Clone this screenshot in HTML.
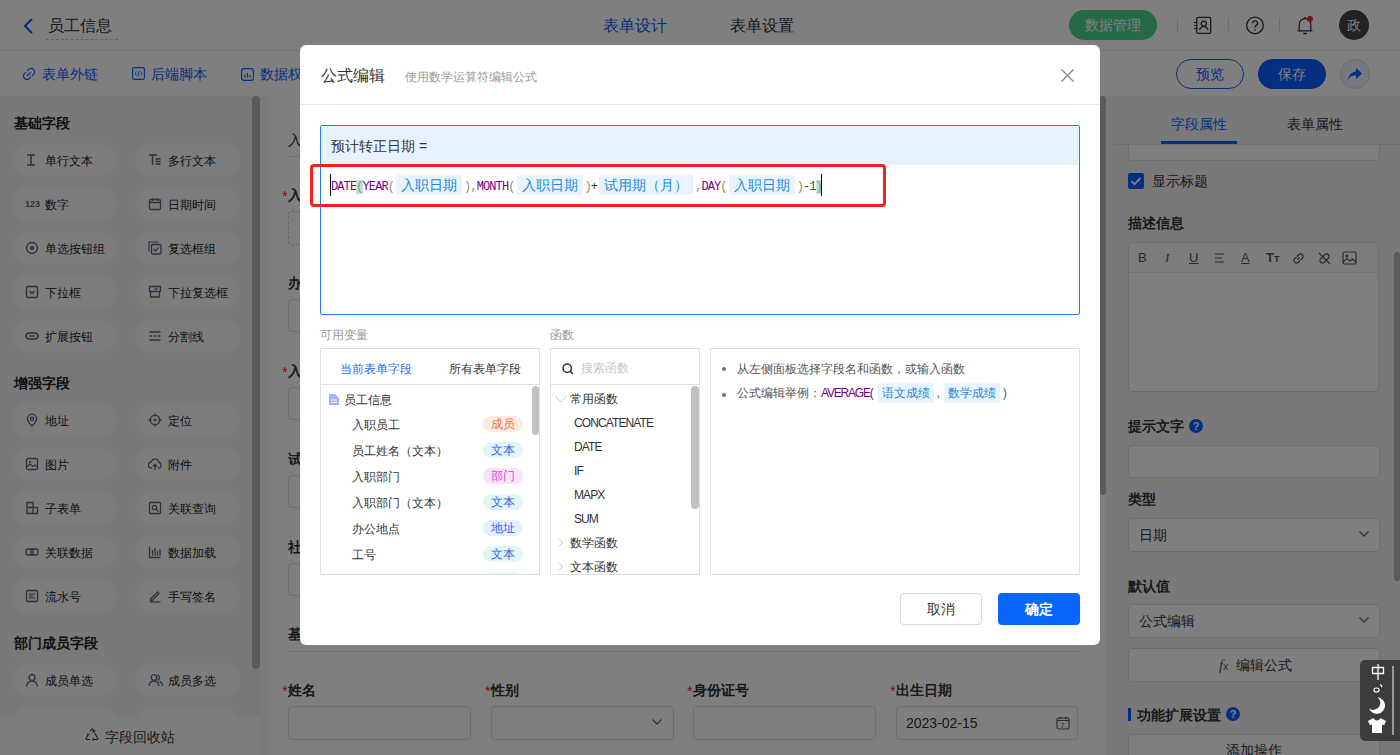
<!DOCTYPE html>
<html><head><meta charset="utf-8">
<style>
*{box-sizing:border-box;margin:0;padding:0}
html,body{width:1400px;height:755px;overflow:hidden;background:#fff}
body{position:relative;font-family:"Liberation Sans",sans-serif;color:#333;font-size:14px}
.a{position:absolute;white-space:nowrap}
.t{line-height:1;}
svg{display:block}
/* header */
#hdr{left:0;top:0;width:1400px;height:51px;background:#fff;border-bottom:1px solid #e8e8e8}
#tb{left:0;top:51px;width:1400px;height:45px;background:#fff}
#side{left:0;top:96px;width:268px;height:659px;background:#f2f3f5}
#form{left:268px;top:96px;width:838px;height:659px;background:#fff}
#rp{left:1106px;top:96px;width:294px;height:659px;background:#f2f3f5}
.pill{position:absolute;width:105px;height:34px;border-radius:17px;background:#fafbfc}
.pill span{position:absolute;left:33px;top:12px;font-size:12px;line-height:12px;color:#222}
.pill svg{position:absolute;left:13px;top:10px}
.sect{position:absolute;left:14px;font-size:14px;font-weight:bold;line-height:14px;color:#222}
.lbl{position:absolute;font-size:14px;font-weight:bold;line-height:14px;color:#333}
.req{position:absolute;color:#e02020;font-size:14px;line-height:14px}
.inp{position:absolute;border:1px solid #ddd;border-radius:4px;background:#fff}
#mask{left:0;top:0;width:1400px;height:755px;background:rgba(0,0,0,.5)}
#modal{left:300px;top:45px;width:800px;height:600px;background:#fff;border-radius:6px}
.chip{display:inline-block;background:#e8f3fd;color:#1a8ad8;font-size:14px;line-height:20px;height:20px;padding:0 5px;margin:0 2px;border-radius:2px;vertical-align:top;font-family:"Liberation Sans",sans-serif}
.code{font-family:"Liberation Mono",monospace;font-size:12px;letter-spacing:-0.9px}
.kw{color:#770088}
.br{color:#a0875a}
.op{color:#333}
.num{color:#116644}
.badge{position:absolute;left:162px;width:40px;height:16px;border-radius:8px;font-size:12px;line-height:16px;text-align:center}
.vrow{position:absolute;left:31px;font-size:12px;line-height:12px;color:#333}
.fn{letter-spacing:-0.9px}
.frow{position:absolute;font-size:12px;line-height:12px;color:#333}
</style></head><body>

<!-- ============ HEADER ============ -->
<div id="hdr" class="a"></div>
<svg class="a" style="left:22px;top:17px" width="14" height="18" viewBox="0 0 14 18"><polyline points="10,2 3,9 10,16" fill="none" stroke="#0b5cff" stroke-width="2.2"/></svg>
<div class="a t" style="left:48px;top:18px;font-size:16px;color:#333">员工信息</div>
<div class="a" style="left:46px;top:39px;width:72px;border-top:1px dashed #c8c8c8"></div>
<div class="a t" style="left:603px;top:18px;font-size:16px;color:#0b5cff">表单设计</div>
<div class="a t" style="left:730px;top:18px;font-size:16px;color:#333">表单设置</div>
<div class="a" style="left:1069px;top:10px;width:88px;height:30px;border-radius:15px;background:#4bd38f"></div>
<div class="a t" style="left:1085px;top:18px;font-size:14px;color:#fff">数据管理</div>
<div class="a" style="left:1177px;top:18px;width:1px;height:14px;background:#ddd"></div>
<div class="a" style="left:1228px;top:18px;width:1px;height:14px;background:#ddd"></div>
<div class="a" style="left:1279px;top:18px;width:1px;height:14px;background:#ddd"></div>
<svg class="a" style="left:1193px;top:16px" width="20" height="20" viewBox="0 0 20 20"><rect x="3.7" y="1.4" width="14" height="16" rx="1.5" fill="none" stroke="#333" stroke-width="1.3"/><circle cx="10.8" cy="7.6" r="2.5" fill="none" stroke="#333" stroke-width="1.3"/><path d="M6.6 14.2c.6-2.4 2.2-3.6 4.2-3.6s3.6 1.2 4.2 3.6" fill="none" stroke="#333" stroke-width="1.3"/><path d="M1 6.5h3.5M1 9.5h3.5M1 12.5h3.5" stroke="#333" stroke-width="1.1"/></svg>
<svg class="a" style="left:1245px;top:16px" width="20" height="20" viewBox="0 0 20 20"><circle cx="10" cy="9.4" r="8.3" fill="none" stroke="#333" stroke-width="1.3"/><path d="M7.5 7.3a2.5 2.5 0 1 1 3.5 2.3c-.7.3-1 .8-1 1.5v.7" fill="none" stroke="#333" stroke-width="1.3"/><circle cx="10" cy="13.8" r=".85" fill="#333"/></svg>
<svg class="a" style="left:1295px;top:15px" width="20" height="21" viewBox="0 0 20 21"><path d="M4.2 15.8V9.5a5.8 5.8 0 0 1 11.6 0v6.3M2.6 15.8h14.8M8.3 18.5h3.4M10 2v1.5" fill="none" stroke="#333" stroke-width="1.3" stroke-linejoin="round"/><circle cx="15" cy="4" r="2.9" fill="#e03030"/></svg>
<div class="a" style="left:1339px;top:10px;width:30px;height:30px;border-radius:15px;background:#444"></div>
<div class="a t" style="left:1347px;top:18px;font-size:14px;color:#fff">政</div>

<!-- ============ TOOLBAR ============ -->
<div id="tb" class="a"></div>
<svg class="a" style="left:22px;top:67px" width="14" height="14" viewBox="0 0 14 14"><path d="M5.5 3.8A3.6 3.6 0 1 1 10.1 8.4M8.5 10.1A3.6 3.6 0 1 1 3.9 5.5M5.4 8.6l3.2-3.2" fill="none" stroke="#0b5cff" stroke-width="1.1" stroke-linecap="round"/></svg>
<div class="a t" style="left:42px;top:67px;font-size:14px;color:#0b5cff">表单外链</div>
<svg class="a" style="left:132px;top:67px" width="13" height="13" viewBox="0 0 13 13"><rect x=".6" y=".6" width="11.8" height="11.8" rx="1.5" fill="none" stroke="#0b5cff" stroke-width="1.1"/><path d="M4.5 4.5L2.8 6.5l1.7 2M8.5 4.5l1.7 2-1.7 2M7.2 4L5.8 9" fill="none" stroke="#0b5cff" stroke-width=".9"/></svg>
<div class="a t" style="left:151px;top:67px;font-size:14px;color:#0b5cff">后端脚本</div>
<svg class="a" style="left:241px;top:68px" width="13" height="13" viewBox="0 0 13 13"><rect x=".6" y=".6" width="11.8" height="11.8" rx="2.5" fill="none" stroke="#0b5cff" stroke-width="1.1"/><path d="M4 6.5v3M6.5 5v4.5M9 7v2.5" stroke="#0b5cff" stroke-width="1.1"/></svg>
<div class="a t" style="left:260px;top:67px;font-size:14px;color:#0b5cff">数据权限</div>
<div class="a" style="left:1176px;top:59px;width:68px;height:30px;border-radius:15px;border:1px solid #0b5cff;background:#fff"></div>
<div class="a t" style="left:1196px;top:67px;font-size:14px;color:#0b5cff">预览</div>
<div class="a" style="left:1258px;top:59px;width:68px;height:30px;border-radius:15px;background:#0b5cff"></div>
<div class="a t" style="left:1278px;top:67px;font-size:14px;color:#fff">保存</div>
<div class="a" style="left:1340px;top:59px;width:30px;height:30px;border-radius:15px;border:1px solid #c9d6f5;background:#eef3ff"></div>
<svg class="a" style="left:1346px;top:66px" width="18" height="16" viewBox="0 0 18 16"><path d="M10 2l6 5.5-6 5.5V9.6C6 9.4 3.5 10.8 2 14c.5-5 3.4-8 8-8.6z" fill="#0b5cff"/></svg>

<!-- ============ LEFT SIDEBAR ============ -->
<div id="side" class="a"></div>
<div class="a" style="left:252px;top:96px;width:8px;height:573px;border-radius:4px;background:#b4b4b4"></div>
<div class="a" style="left:260px;top:96px;width:8px;height:659px;background:#f6f6f6"></div>

<div class="sect" style="top:116px">基础字段</div>
<div class="pill" style="left:12px;top:143px"><svg width="12" height="14" viewBox="0 0 12 14"><path d="M2 2h8M2 12h8M6 2v10" stroke="#56647d" stroke-width="1.6"/></svg><span>单行文本</span></div>
<div class="pill" style="left:135px;top:143px"><svg width="14" height="14" viewBox="0 0 14 14"><path d="M1 2h8M4.5 2v10M7.5 6h5M7.5 8.5h5M7.5 11h5" stroke="#56647d" stroke-width="1.4"/></svg><span>多行文本</span></div>
<div class="pill" style="left:12px;top:187px"><svg width="16" height="14" viewBox="0 0 16 14"><text x="0" y="10" font-size="9" font-weight="bold" fill="#56647d" font-family="Liberation Sans">123</text></svg><span>数字</span></div>
<div class="pill" style="left:135px;top:187px"><svg width="14" height="14" viewBox="0 0 14 14"><rect x="1.5" y="2.5" width="11" height="10" rx="1.5" fill="none" stroke="#56647d" stroke-width="1.3"/><path d="M1.5 5.5h11M4.5 1v3M9.5 1v3" stroke="#56647d" stroke-width="1.3"/></svg><span>日期时间</span></div>
<div class="pill" style="left:12px;top:231px"><svg width="14" height="14" viewBox="0 0 14 14"><circle cx="7" cy="7" r="5.5" fill="none" stroke="#56647d" stroke-width="1.3"/><circle cx="7" cy="7" r="2" fill="#56647d"/></svg><span>单选按钮组</span></div>
<div class="pill" style="left:135px;top:231px"><svg width="14" height="14" viewBox="0 0 14 14"><path d="M1 10.5V1h9.5" fill="none" stroke="#56647d" stroke-width="1.2"/><rect x="3.5" y="3.5" width="9.5" height="9.5" rx="1" fill="none" stroke="#56647d" stroke-width="1.3"/><path d="M5.6 8l1.8 1.8 3.2-3.4" fill="none" stroke="#56647d" stroke-width="1.2"/></svg><span>复选框组</span></div>
<div class="pill" style="left:12px;top:275px"><svg width="14" height="14" viewBox="0 0 14 14"><rect x="1.5" y="1.5" width="11" height="11" rx="1.5" fill="none" stroke="#56647d" stroke-width="1.3"/><path d="M4.5 6l2.5 2.5L9.5 6" fill="none" stroke="#56647d" stroke-width="1.3"/></svg><span>下拉框</span></div>
<div class="pill" style="left:135px;top:275px"><svg width="14" height="14" viewBox="0 0 14 14"><path d="M1.5 1.5h11v5h-11zM2.5 6.5v5.5h9V6.5" fill="none" stroke="#56647d" stroke-width="1.3" stroke-linejoin="round"/><path d="M6.5 3.5l1.2 1.2 1.6-1.8" fill="none" stroke="#56647d" stroke-width="1.1"/></svg><span>下拉复选框</span></div>
<div class="pill" style="left:12px;top:319px"><svg width="14" height="14" viewBox="0 0 14 14"><rect x="1" y="4" width="12" height="6" rx="3" fill="none" stroke="#56647d" stroke-width="1.4"/><path d="M4 7h6" stroke="#56647d" stroke-width="1.2"/></svg><span>扩展按钮</span></div>
<div class="pill" style="left:135px;top:319px"><svg width="14" height="14" viewBox="0 0 14 14"><path d="M1.5 3h11M1.5 11h11M1.5 7h3M6 7h2M9.5 7h3" stroke="#56647d" stroke-width="1.3"/></svg><span>分割线</span></div>

<div class="sect" style="top:376px">增强字段</div>
<div class="pill" style="left:12px;top:403px"><svg width="14" height="14" viewBox="0 0 14 14"><path d="M7 13s-4.5-4.2-4.5-7.3a4.5 4.5 0 0 1 9 0C11.5 8.8 7 13 7 13z" fill="none" stroke="#56647d" stroke-width="1.3"/><circle cx="7" cy="5.8" r="1.6" fill="none" stroke="#56647d" stroke-width="1.2"/></svg><span>地址</span></div>
<div class="pill" style="left:135px;top:403px"><svg width="14" height="14" viewBox="0 0 14 14"><circle cx="7" cy="7" r="4.8" fill="none" stroke="#56647d" stroke-width="1.3"/><circle cx="7" cy="7" r="1.3" fill="#56647d"/><path d="M7 .5v3M7 10.5v3M.5 7h3M10.5 7h3" stroke="#56647d" stroke-width="1.3"/></svg><span>定位</span></div>
<div class="pill" style="left:12px;top:447px"><svg width="14" height="14" viewBox="0 0 14 14"><rect x="1.5" y="1.5" width="11" height="11" rx="1.5" fill="none" stroke="#56647d" stroke-width="1.3"/><path d="M1.5 10l3.5-3 3 2.5 2-1.5 2.5 2" fill="none" stroke="#56647d" stroke-width="1.2"/><circle cx="5" cy="5" r="1.1" fill="#56647d"/></svg><span>图片</span></div>
<div class="pill" style="left:135px;top:447px"><svg width="14" height="14" viewBox="0 0 14 14"><path d="M4 11H3.5a3 3 0 0 1-.3-6A4 4 0 0 1 11 5.5a2.8 2.8 0 0 1-.5 5.5H10" fill="none" stroke="#56647d" stroke-width="1.3"/><path d="M7 13V7.5M5 9.5l2-2 2 2" fill="none" stroke="#56647d" stroke-width="1.3"/></svg><span>附件</span></div>
<div class="pill" style="left:12px;top:491px"><svg width="14" height="14" viewBox="0 0 14 14"><path d="M2 1.5h6v11H2zM8 6.5h4.5v6H8M2 6.5h6" fill="none" stroke="#56647d" stroke-width="1.3"/></svg><span>子表单</span></div>
<div class="pill" style="left:135px;top:491px"><svg width="14" height="14" viewBox="0 0 14 14"><rect x="1.5" y="1.5" width="11" height="11" rx="1" fill="none" stroke="#56647d" stroke-width="1.3"/><circle cx="6.5" cy="6.5" r="2.2" fill="none" stroke="#56647d" stroke-width="1.2"/><path d="M8.2 8.2l2.5 2.5M4 4h0" stroke="#56647d" stroke-width="1.3"/></svg><span>关联查询</span></div>
<div class="pill" style="left:12px;top:535px"><svg width="14" height="14" viewBox="0 0 14 14"><rect x="1" y="4" width="7" height="6" rx="1.5" fill="none" stroke="#56647d" stroke-width="1.3"/><rect x="6" y="4" width="7" height="6" rx="1.5" fill="none" stroke="#56647d" stroke-width="1.3"/></svg><span>关联数据</span></div>
<div class="pill" style="left:135px;top:535px"><svg width="14" height="14" viewBox="0 0 14 14"><path d="M1.5 1.5v11h11M4.5 5v5.5M7 3v7.5M9.5 6v4.5M12 4v6.5" fill="none" stroke="#56647d" stroke-width="1.3"/></svg><span>数据加载</span></div>
<div class="pill" style="left:12px;top:579px"><svg width="14" height="14" viewBox="0 0 14 14"><rect x="1.5" y="1.5" width="11" height="11" rx="1" fill="none" stroke="#56647d" stroke-width="1.3"/><path d="M4 5h6M4 7h4M4 9h6" stroke="#56647d" stroke-width="1.2"/></svg><span>流水号</span></div>
<div class="pill" style="left:135px;top:579px"><svg width="14" height="14" viewBox="0 0 14 14"><path d="M2.5 10L9.5 3l1.5 1.5-7 7H2.5z" fill="none" stroke="#56647d" stroke-width="1.3"/><path d="M1.5 13h11" stroke="#56647d" stroke-width="1.2"/></svg><span>手写签名</span></div>

<div class="sect" style="top:636px">部门成员字段</div>
<div class="pill" style="left:12px;top:663px"><svg width="14" height="14" viewBox="0 0 14 14"><circle cx="7" cy="4.5" r="3" fill="none" stroke="#56647d" stroke-width="1.3"/><path d="M1.5 13.5c.5-3.5 2.7-5.3 5.5-5.3s5 1.8 5.5 5.3" fill="none" stroke="#56647d" stroke-width="1.3"/></svg><span>成员单选</span></div>
<div class="pill" style="left:135px;top:663px"><svg width="16" height="14" viewBox="0 0 16 14"><circle cx="6" cy="4.5" r="2.8" fill="none" stroke="#56647d" stroke-width="1.3"/><path d="M1 13c.5-3.3 2.3-5 5-5s4.5 1.7 5 5M9.5 1.8a2.8 2.8 0 0 1 0 5.4M11.5 8.3c1.8.6 2.8 2.2 3.2 4.7" fill="none" stroke="#56647d" stroke-width="1.3"/></svg><span>成员多选</span></div>
<div class="pill" style="left:12px;top:707px"></div>
<div class="pill" style="left:135px;top:707px"></div>
<div class="a" style="left:0;top:717px;width:260px;height:38px;background:#fbfbfb"></div>
<svg class="a" style="left:84px;top:728px" width="16" height="14" viewBox="0 0 16 14"><path d="M6.2 3.2L7.6 1a.6.6 0 0 1 1 0l1.6 2.6M10.8 5.3l2.9 4.9c.3.5 0 1.2-.6 1.2H9.5M6.2 11.4H2.8c-.6 0-.9-.7-.6-1.2l1.9-3.2" fill="none" stroke="#333" stroke-width="1.05"/><path d="M10.8 2.2l-.4 1.9-1.9-.3M9.9 10.2l-1.6 1.2 1.6 1.3M2.9 5.9l1.4 1.2 1.1-1.6" fill="none" stroke="#333" stroke-width="1"/></svg>
<div class="a t" style="left:105px;top:730px;font-size:14px;color:#333">字段回收站</div>

<!-- ============ CENTER FORM ============ -->
<div id="form" class="a"></div>
<div class="a" style="left:1100px;top:96px;width:6px;height:399px;border-radius:3px;background:#b4b4b4"></div>
<div class="lbl" style="left:288px;top:133px;font-weight:normal;color:#222">入职信息</div>
<div class="a" style="left:288px;top:156px;width:790px;height:1px;background:#e0e0e0"></div>
<div class="req" style="left:282px;top:189px">*</div><div class="lbl" style="left:288px;top:188px">入职员工</div>
<div class="inp" style="left:288px;top:211px;width:790px;height:34px;border:1px dashed #ccc"></div>
<div class="lbl" style="left:288px;top:276px">办公地点</div>
<div class="inp" style="left:288px;top:299px;width:790px;height:33px"></div>
<div class="req" style="left:282px;top:365px">*</div><div class="lbl" style="left:288px;top:364px">入职部门</div>
<div class="inp" style="left:288px;top:387px;width:790px;height:33px"></div>
<div class="lbl" style="left:288px;top:452px">试用期（月）</div>
<div class="inp" style="left:288px;top:475px;width:790px;height:33px"></div>
<div class="lbl" style="left:288px;top:540px">社保</div>
<div class="inp" style="left:288px;top:563px;width:790px;height:33px"></div>
<div class="lbl" style="left:288px;top:627px">基本信息</div>
<div class="a" style="left:288px;top:651px;width:790px;height:1px;background:#e0e0e0"></div>
<div class="req" style="left:282px;top:684px">*</div><div class="lbl" style="left:288px;top:683px">姓名</div>
<div class="inp" style="left:288px;top:706px;width:183px;height:34px"></div>
<div class="req" style="left:485px;top:684px">*</div><div class="lbl" style="left:491px;top:683px">性别</div>
<div class="inp" style="left:491px;top:706px;width:183px;height:34px"></div>
<svg class="a" style="left:651px;top:718px" width="12" height="8" viewBox="0 0 12 8"><path d="M1.5 1.5l4.5 4.5 4.5-4.5" fill="none" stroke="#666" stroke-width="1.3"/></svg>
<div class="req" style="left:687px;top:684px">*</div><div class="lbl" style="left:693px;top:683px">身份证号</div>
<div class="inp" style="left:693px;top:706px;width:183px;height:34px"></div>
<div class="req" style="left:890px;top:684px">*</div><div class="lbl" style="left:896px;top:683px">出生日期</div>
<div class="inp" style="left:896px;top:706px;width:182px;height:34px"></div>
<div class="a t" style="left:906px;top:716px;font-size:14px;color:#333">2023-02-15</div>
<svg class="a" style="left:1056px;top:716px" width="14" height="14" viewBox="0 0 14 14"><rect x="1" y="2" width="12" height="11" rx="1.5" fill="none" stroke="#555" stroke-width="1.1"/><path d="M1 4.5h12M4 .8v2.5M10 .8v2.5" stroke="#555" stroke-width="1.1"/><text x="4.3" y="12" font-size="8" fill="#555" font-family="Liberation Sans">7</text></svg>

<!-- ============ RIGHT PANEL ============ -->
<div id="rp" class="a"></div>
<div class="inp" style="left:1128px;top:120px;width:252px;height:41px"></div>
<div class="a" style="left:1106px;top:96px;width:294px;height:48px;background:#f2f3f5"></div>
<div class="a t" style="left:1171px;top:117px;font-size:14px;color:#0b5cff">字段属性</div>
<div class="a t" style="left:1287px;top:117px;font-size:14px;color:#333">表单属性</div>
<div class="a" style="left:1114px;top:144px;width:286px;height:1px;background:#e0e0e0"></div>
<div class="a" style="left:1161px;top:141px;width:76px;height:3px;background:#0b5cff"></div>
<div class="a" style="left:1128px;top:173px;width:16px;height:16px;border-radius:2px;background:#0b5cff"></div>
<svg class="a" style="left:1128px;top:173px" width="16" height="16" viewBox="0 0 16 16"><path d="M3.5 8.2l3 3 6-6.2" fill="none" stroke="#fff" stroke-width="1.8"/></svg>
<div class="a t" style="left:1152px;top:174px;font-size:14px;color:#333">显示标题</div>
<div class="lbl" style="left:1128px;top:216px">描述信息</div>
<div class="inp" style="left:1128px;top:242px;width:251px;height:150px"></div>
<div class="a" style="left:1129px;top:243px;width:249px;height:30px;background:#fafafa;border-bottom:1px solid #e6e6e6;border-radius:4px 4px 0 0"></div>
<div class="a" style="left:1138px;top:251px;font-size:13px;line-height:14px;color:#555">B</div>
<div class="a" style="left:1165px;top:251px;font-size:13px;line-height:14px;color:#555;font-style:italic;font-family:'Liberation Serif'">I</div>
<div class="a" style="left:1189px;top:251px;font-size:13px;line-height:14px;color:#555;text-decoration:underline">U</div>
<svg class="a" style="left:1214px;top:252px" width="12" height="12" viewBox="0 0 12 12"><path d="M1 2h9M1 6h7M1 10h9" stroke="#555" stroke-width="1.1"/></svg>
<div class="a" style="left:1241px;top:251px;font-size:13px;line-height:14px;color:#555;text-decoration:underline">A</div>
<div class="a" style="left:1266px;top:251px;font-size:13px;line-height:14px;color:#555;font-weight:bold">T<span style="font-size:9px">T</span></div>
<svg class="a" style="left:1291px;top:251px" width="15" height="15" viewBox="0 0 15 15"><path d="M6.5 8.5l2-2M5.5 6L3.5 8a2.5 2.5 0 0 0 3.5 3.5l2-2M9.5 9l2-2A2.5 2.5 0 0 0 8 3.5l-2 2" fill="none" stroke="#555" stroke-width="1.2"/></svg>
<svg class="a" style="left:1317px;top:251px" width="15" height="15" viewBox="0 0 15 15"><path d="M5.5 6L3.5 8a2.5 2.5 0 0 0 3.5 3.5l2-2M9.5 9l2-2A2.5 2.5 0 0 0 8 3.5l-2 2M2 2l11 11" fill="none" stroke="#555" stroke-width="1.2"/></svg>
<svg class="a" style="left:1342px;top:251px" width="15" height="14" viewBox="0 0 15 14"><rect x="1" y="1" width="13" height="12" rx="1.5" fill="none" stroke="#555" stroke-width="1.2"/><circle cx="5" cy="5" r="1.3" fill="#555"/><path d="M1 11l4-3.5 3 2.5 2.5-2 3.5 3" fill="none" stroke="#555" stroke-width="1.1"/></svg>

<div class="lbl" style="left:1128px;top:419px">提示文字</div>
<div class="a" style="left:1189px;top:419px;width:14px;height:14px;border-radius:7px;background:#0b5cff;color:#fff;font-size:11px;line-height:14px;text-align:center;font-weight:bold">?</div>
<div class="inp" style="left:1128px;top:445px;width:252px;height:33px"></div>
<div class="lbl" style="left:1128px;top:492px">类型</div>
<div class="inp" style="left:1128px;top:518px;width:252px;height:34px"></div>
<div class="a t" style="left:1139px;top:528px;font-size:14px;color:#333">日期</div>
<svg class="a" style="left:1358px;top:530px" width="12" height="8" viewBox="0 0 12 8"><path d="M1.5 1.5l4.5 4.5 4.5-4.5" fill="none" stroke="#666" stroke-width="1.3"/></svg>
<div class="lbl" style="left:1128px;top:579px">默认值</div>
<div class="inp" style="left:1128px;top:604px;width:252px;height:34px"></div>
<div class="a t" style="left:1139px;top:614px;font-size:14px;color:#333">公式编辑</div>
<svg class="a" style="left:1358px;top:616px" width="12" height="8" viewBox="0 0 12 8"><path d="M1.5 1.5l4.5 4.5 4.5-4.5" fill="none" stroke="#666" stroke-width="1.3"/></svg>
<div class="inp" style="left:1128px;top:648px;width:252px;height:34px"></div>
<div class="a" style="left:1219px;top:657px;font-size:15px;line-height:16px;color:#555;font-style:italic;font-family:'Liberation Serif'">f<span style="font-size:10px;font-style:normal;font-family:'Liberation Sans'">x</span></div>
<div class="a t" style="left:1236px;top:658px;font-size:14px;color:#333">编辑公式</div>
<div class="a" style="left:1128px;top:708px;width:3px;height:13px;background:#0b5cff"></div>
<div class="lbl" style="left:1137px;top:708px">功能扩展设置</div>
<div class="a" style="left:1226px;top:707px;width:14px;height:14px;border-radius:7px;background:#0b5cff;color:#fff;font-size:11px;line-height:14px;text-align:center;font-weight:bold">?</div>
<div class="inp" style="left:1128px;top:734px;width:252px;height:34px"></div>
<div class="a t" style="left:1226px;top:743px;font-size:14px;color:#333">添加操作</div>
<div class="a" style="left:1394px;top:252px;width:6px;height:329px;border-radius:3px;background:#b4b4b4"></div>

<!-- ============ MASK ============ -->
<div id="mask" class="a"></div>

<!-- ============ MODAL ============ -->
<div id="modal" class="a"></div>
<div class="a t" style="left:321px;top:68px;font-size:16px;color:#333">公式编辑</div>
<div class="a t" style="left:405px;top:71px;font-size:12px;color:#999">使用数学运算符编辑公式</div>
<svg class="a" style="left:1060px;top:68px" width="15" height="15" viewBox="0 0 15 15"><path d="M1.5 1.5l12 12M13.5 1.5l-12 12" stroke="#888" stroke-width="1.3"/></svg>
<div class="a" style="left:300px;top:104px;width:800px;height:1px;background:#e8e8e8"></div>
<!-- formula box -->
<div class="a" style="left:320px;top:125px;width:760px;height:190px;border:1px solid #2a7bf3;border-radius:2px;background:#fff"></div>
<div class="a" style="left:321px;top:126px;width:758px;height:39px;background:#e6f2fd"></div>
<div class="a t" style="left:331px;top:139px;font-size:14px;color:#333">预计转正日期 =</div>
<div class="a" style="left:330px;top:174px;width:1px;height:22px;background:#000"></div>
<div class="a" style="left:331px;top:175px;height:20px;line-height:20px;font-size:14px;white-space:nowrap"><span class="code kw">DATE</span><span class="code br" style="background:#b9e3dd">(</span><span class="code kw">YEAR</span><span class="code br">(</span><span class="chip">入职日期</span><span class="code br">)</span><span class="code br">,</span><span class="code kw">MONTH</span><span class="code br">(</span><span class="chip">入职日期</span><span class="code br">)</span><span class="code op">+</span><span class="chip">试用期（月）</span><span class="code br">,</span><span class="code kw">DAY</span><span class="code br">(</span><span class="chip">入职日期</span><span class="code br">)</span><span class="code op">-</span><span class="code num">1</span><span class="code br" style="background:#b9e3dd">)</span></div>
<div class="a" style="left:821px;top:174px;width:1px;height:22px;background:#000"></div>
<div class="a" style="left:310px;top:164px;width:576px;height:43px;border:3px solid #fa1e1e;border-radius:4px"></div>
<!-- labels -->
<div class="a t" style="left:320px;top:329px;font-size:12px;color:#999">可用变量</div>
<div class="a t" style="left:550px;top:329px;font-size:12px;color:#999">函数</div>
<!-- variable panel -->
<div class="a" style="left:320px;top:348px;width:220px;height:227px;border:1px solid #e0e0e0;background:#fff;overflow:hidden">
  <div class="a t" style="left:19px;top:14px;font-size:12px;color:#1f6cf5">当前表单字段</div>
  <div class="a t" style="left:128px;top:14px;font-size:12px;color:#333">所有表单字段</div>
  <div class="a" style="left:0;top:35px;width:220px;height:1px;background:#e0e0e0"></div>
  <svg class="a" style="left:8px;top:45px" width="10" height="11" viewBox="0 0 10 11"><path d="M0 0h6l4 4v7H0z" fill="#a4b0f9"/><path d="M2 6h6M2 8.3h6" stroke="#fff" stroke-width="1"/></svg>
  <div class="vrow" style="left:23px;top:45px">员工信息</div>
  <div class="vrow" style="top:70px">入职员工</div><div class="badge" style="top:67px;background:#fdece2;color:#f0742e">成员</div>
  <div class="vrow" style="top:96px">员工姓名（文本）</div><div class="badge" style="top:93px;background:#e2f6f5;color:#2c64f0">文本</div>
  <div class="vrow" style="top:122px">入职部门</div><div class="badge" style="top:119px;background:#f9e3f9;color:#d548d5">部门</div>
  <div class="vrow" style="top:148px">入职部门（文本）</div><div class="badge" style="top:145px;background:#e2f6f5;color:#2c64f0">文本</div>
  <div class="vrow" style="top:174px">办公地点</div><div class="badge" style="top:171px;background:#e6effd;color:#2c64f0">地址</div>
  <div class="vrow" style="top:200px">工号</div><div class="badge" style="top:197px;background:#e2f6f5;color:#2c64f0">文本</div>
  <div class="badge" style="top:223px;background:#e2f6f5;color:#2c64f0"></div>
  <div class="a" style="left:211px;top:37px;width:7px;height:49px;border-radius:4px;background:#c1c1c1"></div>
</div>
<!-- function panel -->
<div class="a" style="left:550px;top:348px;width:150px;height:227px;border:1px solid #e0e0e0;background:#fff;overflow:hidden">
  <svg class="a" style="left:11px;top:14px" width="12" height="12" viewBox="0 0 12 12"><circle cx="5.2" cy="5.2" r="4.2" fill="none" stroke="#333" stroke-width="1.5"/><path d="M8.2 8.2l2.8 2.8" stroke="#333" stroke-width="1.5"/></svg>
  <div class="a t" style="left:30px;top:13px;font-size:12px;color:#c8c8c8">搜索函数</div>
  <div class="a" style="left:0;top:35px;width:150px;height:1px;background:#e0e0e0"></div>
  <svg class="a" style="left:4px;top:47px" width="12" height="7" viewBox="0 0 12 7"><path d="M.5 .5l5.5 5.5 5.5-5.5" fill="none" stroke="#c8c8c8" stroke-width="1"/></svg>
  <div class="frow" style="left:19px;top:44px">常用函数</div>
  <div class="frow fn" style="left:23px;top:68px">CONCATENATE</div>
  <div class="frow fn" style="left:23px;top:92px">DATE</div>
  <div class="frow fn" style="left:23px;top:116px">IF</div>
  <div class="frow fn" style="left:23px;top:140px">MAPX</div>
  <div class="frow fn" style="left:23px;top:164px">SUM</div>
  <svg class="a" style="left:7px;top:189px" width="5" height="9" viewBox="0 0 5 9"><path d="M.5 .5l4 4-4 4" fill="none" stroke="#c8c8c8" stroke-width="1"/></svg>
  <div class="frow" style="left:19px;top:188px">数学函数</div>
  <svg class="a" style="left:7px;top:213px" width="5" height="9" viewBox="0 0 5 9"><path d="M.5 .5l4 4-4 4" fill="none" stroke="#c8c8c8" stroke-width="1"/></svg>
  <div class="frow" style="left:19px;top:212px">文本函数</div>
  <div class="a" style="left:140px;top:37px;width:8px;height:123px;border-radius:4px;background:#c1c1c1"></div>
</div>
<!-- info panel -->
<div class="a" style="left:710px;top:348px;width:370px;height:227px;border:1px solid #e0e0e0;background:#fff">
  <div class="a" style="left:11px;top:18px;width:4px;height:4px;border-radius:2px;background:#6b7280"></div>
  <div class="a t" style="left:26px;top:14px;font-size:12px;color:#555">从左侧面板选择字段名和函数，或输入函数</div>
  <div class="a" style="left:11px;top:44px;width:4px;height:4px;border-radius:2px;background:#6b7280"></div>
  <div class="a" style="left:26px;top:34px;height:20px;line-height:20px;font-size:12px;color:#555;white-space:nowrap">公式编辑举例：<span style="color:#770088;letter-spacing:-1.2px">AVERAGE(</span><span class="chip" style="font-size:12px;padding:0 4px;margin:0 3px 0 5px">语文成绩</span><span style="letter-spacing:-1px">,</span><span class="chip" style="font-size:12px;padding:0 4px;margin:0 3px 0 5px">数学成绩</span>)</div>
</div>
<!-- buttons -->
<div class="a" style="left:900px;top:593px;width:82px;height:32px;border:1px solid #d9d9d9;border-radius:4px;background:#fff"></div>
<div class="a t" style="left:927px;top:602px;font-size:14px;color:#333">取消</div>
<div class="a" style="left:998px;top:593px;width:82px;height:32px;border-radius:4px;background:#0866ff"></div>
<div class="a t" style="left:1025px;top:602px;font-size:14px;color:#fff;font-weight:bold">确定</div>

<!-- IME widget -->
<div class="a" style="left:1360px;top:660px;width:46px;height:81px;border-radius:5px;background:#3c3c3c"></div>
<div class="a" style="left:1392px;top:666px;width:2px;height:69px;background:#9a9a9a"></div>
<svg class="a" style="left:1370px;top:663px" width="16" height="18" viewBox="0 0 16 18"><path d="M2.5 4.5h11v6h-11z" fill="none" stroke="#fff" stroke-width="1.3"/><path d="M8 1v16" stroke="#fff" stroke-width="1.3"/></svg>
<svg class="a" style="left:1373px;top:684px" width="11" height="9" viewBox="0 0 11 9"><ellipse cx="3.5" cy="6" rx="2.6" ry="2" fill="none" stroke="#fff" stroke-width="1.1"/><path d="M7 .8c1.4.2 2 1.2 1.6 2.6" fill="none" stroke="#fff" stroke-width="1.1"/></svg>
<svg class="a" style="left:1368px;top:696px" width="18" height="19" viewBox="0 0 18 19"><path transform="translate(18,0) scale(-1,1)" d="M8.5 1.2A8.3 8.3 0 1 0 17 12.5 6.2 6.2 0 0 1 8.5 1.2z" fill="#fff"/></svg>
<svg class="a" style="left:1367px;top:717px" width="20" height="17" viewBox="0 0 20 17"><path d="M6.5 1L1 4l1.8 4.2L5 7.4V16h10V7.4l2.2.8L19 4l-5.5-3c-.6 1.6-2 2.4-3.5 2.4S7.1 2.6 6.5 1z" fill="#fff"/></svg>
</body></html>
